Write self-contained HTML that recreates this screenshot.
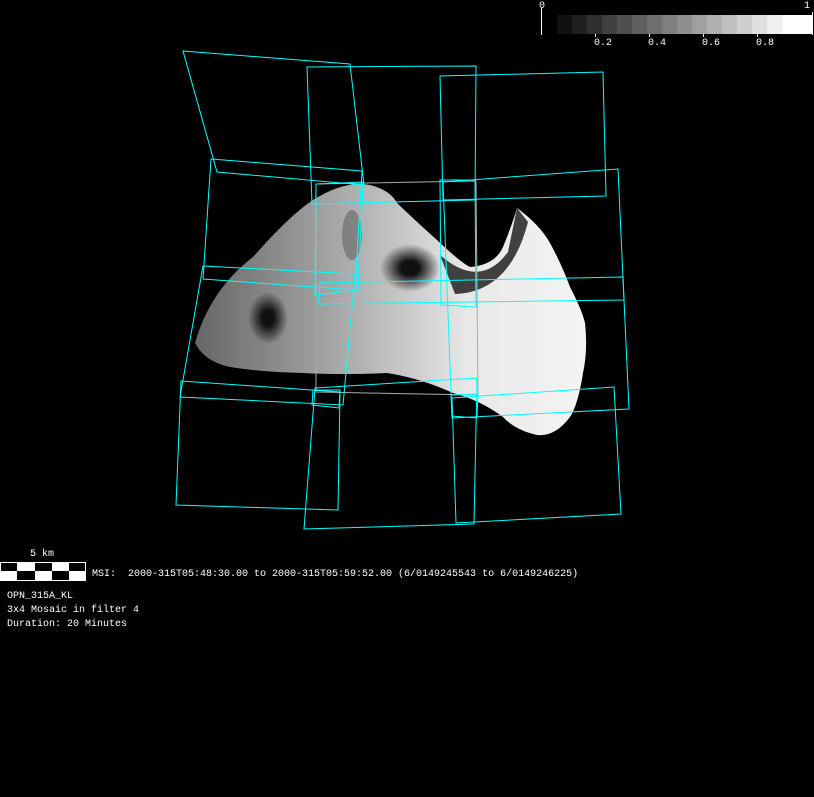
<!DOCTYPE html>
<html><head><style>
body{margin:0;background:#000;width:814px;height:797px;overflow:hidden;position:relative;font-family:"Liberation Mono","DejaVu Sans Mono",monospace;font-size:10px;color:#fff}
.t{position:absolute;white-space:pre;line-height:12px}
</style></head><body>
<svg width="814" height="797" style="position:absolute;left:0;top:0">
<defs>
<linearGradient id="g" x1="195" y1="0" x2="585" y2="0" gradientUnits="userSpaceOnUse">
<stop offset="0" stop-color="#666"/><stop offset="0.35" stop-color="#a4a4a4"/><stop offset="0.7" stop-color="#e8e8e8"/><stop offset="1" stop-color="#f4f4f4"/>
</linearGradient>
<radialGradient id="c1"><stop offset="0.3" stop-color="#111"/><stop offset="1" stop-color="#111" stop-opacity="0"/></radialGradient>
</defs>
<path d="M195,343 Q210,290 253,257 Q290,215 313,200 Q345,180 370,185 Q390,190 397,203 Q420,225 437,240 Q460,262 470,267 Q495,265 503,247 Q512,225 517,208 Q540,225 550,243 Q562,265 570,287 Q582,310 585,323 Q588,350 583,373 Q578,405 570,417 Q555,437 537,435 Q515,430 503,417 Q480,400 453,393 Q420,378 387,373 Q340,375 303,373 Q260,372 230,367 Q205,362 195,343 Z" fill="url(#g)"/>
<path d="M440,255 Q480,290 508,252 L517,208 L528,222 Q510,292 455,294 Z" fill="#222" opacity="0.85"/>
<ellipse cx="268" cy="318" rx="20" ry="26" fill="url(#c1)"/>
<ellipse cx="410" cy="268" rx="30" ry="24" fill="url(#c1)"/>
<ellipse cx="352" cy="235" rx="10" ry="25" fill="#555" opacity="0.5"/>
<g fill="none" stroke="#aaa" stroke-width="1">
<path d="M316,184 L476,181 L478,395 L316,392 Z"/>
</g>
<g fill="none" stroke="#00ffff" stroke-width="1">
<path d="M183,51 L350,64 L364,185 L217,172 Z"/>
<path d="M307,67 L476,66 L475,200 L312,204 Z"/>
<path d="M440,76 L603,72 L606,196 L443,200 Z"/>
<path d="M211,159 L362,171 L355,290 L203,279 Z"/>
<path d="M316,184 L363,182 L358,290 L315,295 Z"/>
<path d="M443,182 L618,169 L629,409 L452,418 Z"/>
<path d="M203,266 L355,274 L343,405 L180,397 Z"/>
<path d="M320,283 L623,277 L624,300 L318,304 Z"/>
<path d="M440,180 L475,180 L476,307 L441,305 Z"/>
<path d="M181,381 L340,392 L338,510 L176,505 Z"/>
<path d="M315,388 L477,378 L474,524 L304,529 Z"/>
<path d="M452,398 L614,387 L621,514 L456,523 Z"/>
<path d="M313,390 L340,390 L339,408 L312,405 Z"/>
<path d="M451,395 L478,394 L477,418 L452,416 Z"/>
</g>
<line x1="541.5" y1="8" x2="541.5" y2="35" stroke="#fff"/>
<g>
<rect x="557" y="15" width="15" height="19" fill="#111"/><rect x="572" y="15" width="15" height="19" fill="#1f1f1f"/>
<rect x="587" y="15" width="15" height="19" fill="#2f2f2f"/><rect x="602" y="15" width="15" height="19" fill="#404040"/>
<rect x="617" y="15" width="15" height="19" fill="#4f4f4f"/><rect x="632" y="15" width="15" height="19" fill="#5f5f5f"/>
<rect x="647" y="15" width="15" height="19" fill="#6f6f6f"/><rect x="662" y="15" width="15" height="19" fill="#7f7f7f"/>
<rect x="677" y="15" width="15" height="19" fill="#8f8f8f"/><rect x="692" y="15" width="15" height="19" fill="#9f9f9f"/>
<rect x="707" y="15" width="15" height="19" fill="#afafaf"/><rect x="722" y="15" width="15" height="19" fill="#bfbfbf"/>
<rect x="737" y="15" width="15" height="19" fill="#cfcfcf"/><rect x="752" y="15" width="15" height="19" fill="#dfdfdf"/>
<rect x="767" y="15" width="15" height="19" fill="#efefef"/><rect x="782" y="15" width="31" height="19" fill="#fff"/>
</g>
<line x1="812.5" y1="12" x2="812.5" y2="35" stroke="#fff"/>
<g stroke="#fff"><line x1="595.5" y1="34" x2="595.5" y2="37"/><line x1="649.5" y1="34" x2="649.5" y2="37"/><line x1="703.5" y1="34" x2="703.5" y2="37"/><line x1="757.5" y1="34" x2="757.5" y2="37"/></g>
<rect x="0" y="562" width="86" height="19" fill="#fff"/>
<rect x="1" y="563" width="16" height="8" fill="#000"/><rect x="35" y="563" width="17" height="8" fill="#000"/><rect x="69" y="563" width="16" height="8" fill="#000"/>
<rect x="17" y="571" width="18" height="9" fill="#000"/><rect x="52" y="571" width="17" height="9" fill="#000"/>
</svg>
<div class="t" style="left:539px;top:1px">0</div>
<div class="t" style="left:804px;top:1px">1</div>
<div class="t" style="left:594px;top:38px">0.2</div>
<div class="t" style="left:648px;top:38px">0.4</div>
<div class="t" style="left:702px;top:38px">0.6</div>
<div class="t" style="left:756px;top:38px">0.8</div>
<div class="t" style="left:30px;top:549px">5 km</div>
<div class="t" style="left:92px;top:569px">MSI:  2000-315T05:48:30.00 to 2000-315T05:59:52.00 (6/0149245543 to 6/0149246225)</div>
<div class="t" style="left:7px;top:591px">OPN_315A_KL</div>
<div class="t" style="left:7px;top:605px">3x4 Mosaic in filter 4</div>
<div class="t" style="left:7px;top:619px">Duration: 20 Minutes</div>
</body></html>
